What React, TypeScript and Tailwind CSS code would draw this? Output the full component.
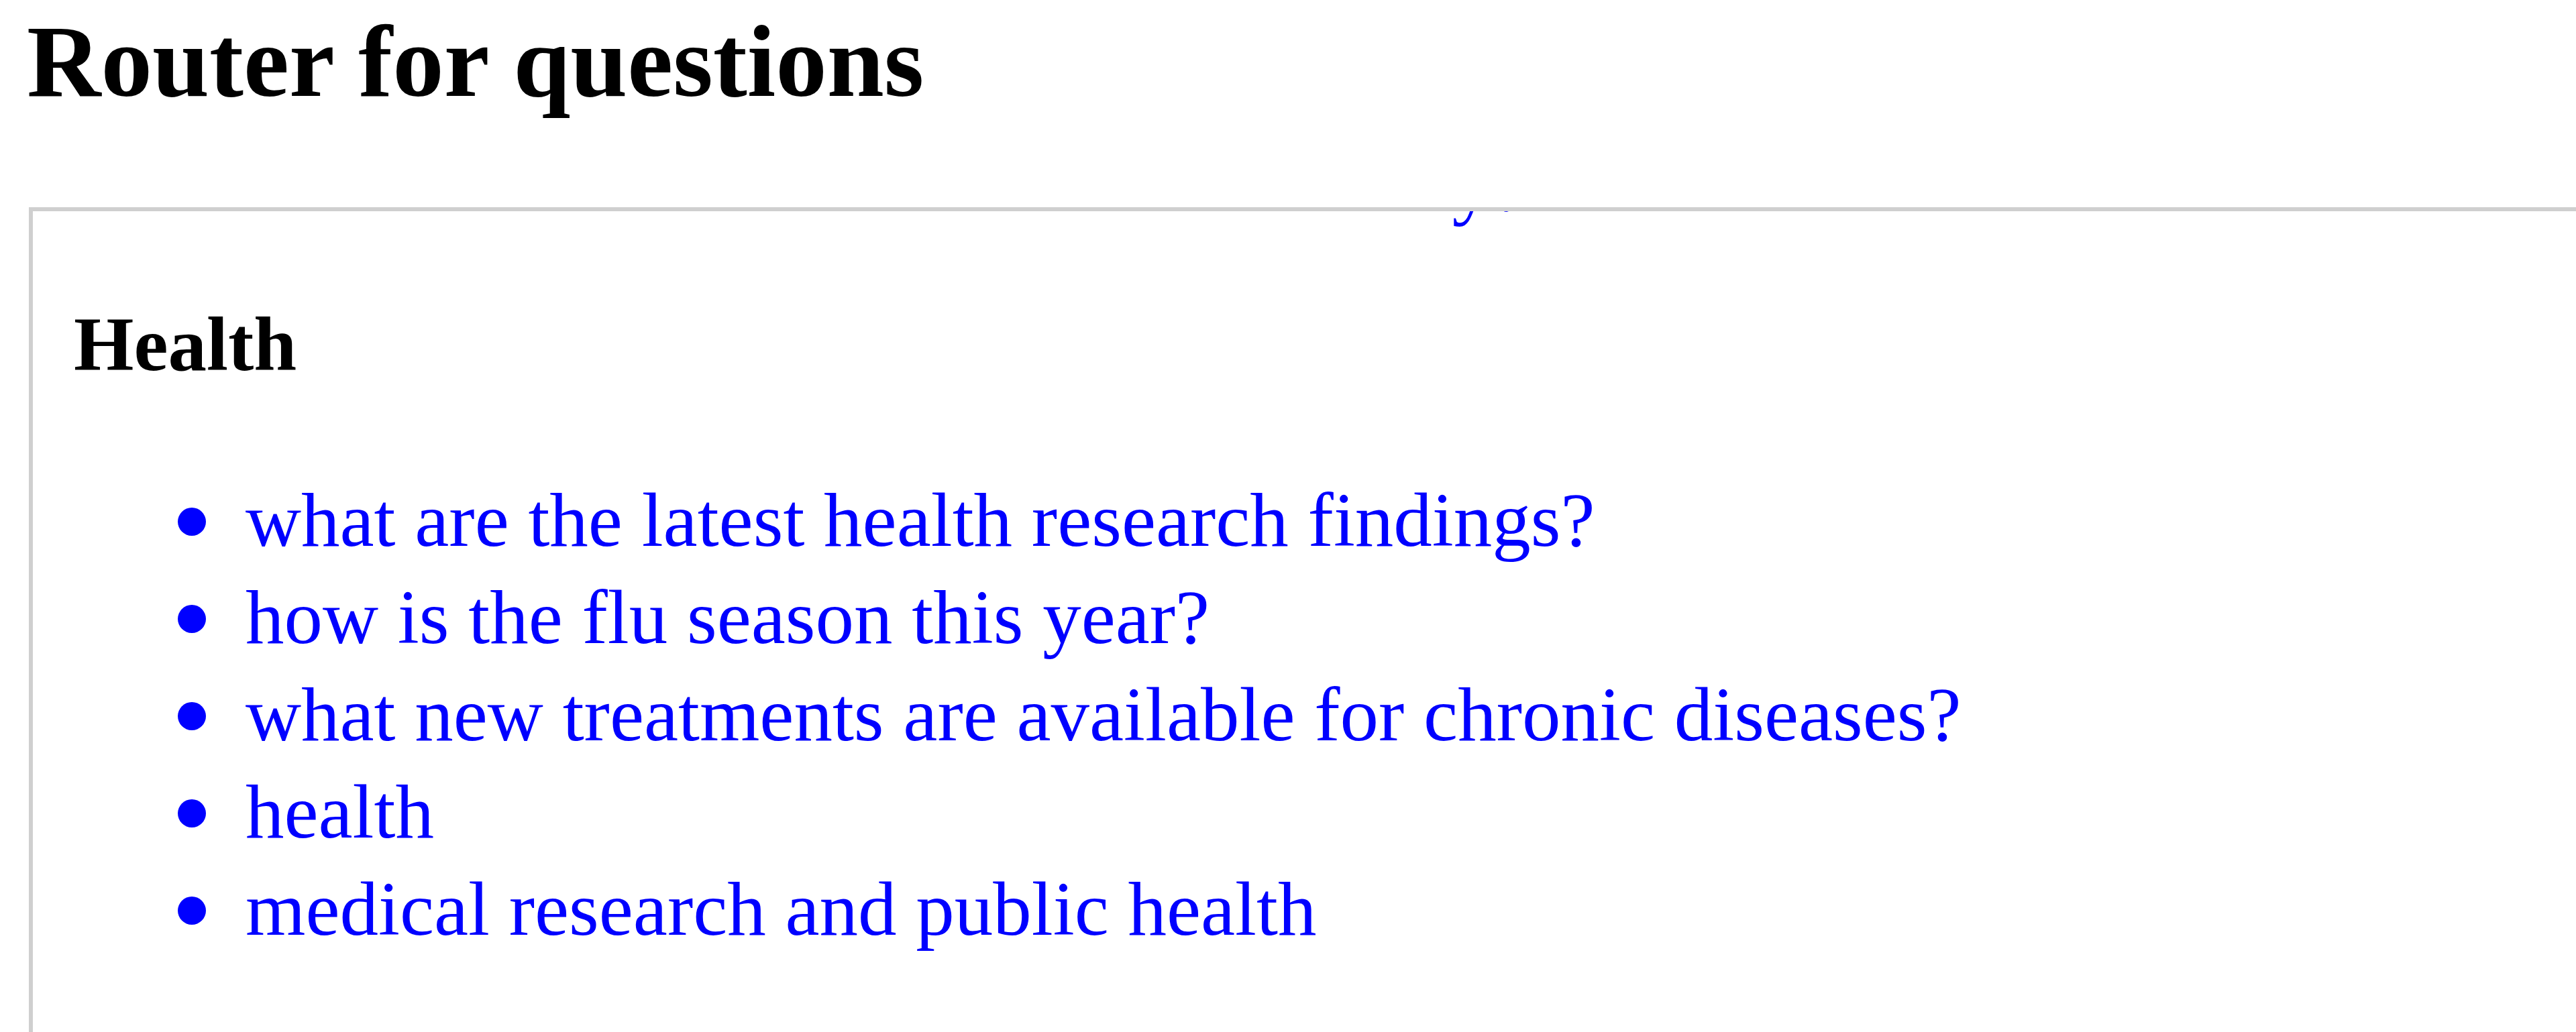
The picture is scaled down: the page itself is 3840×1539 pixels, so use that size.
import React from 'react';

// Question router preview: a title, then an embedded frame scrolled to the "Health" category.

const PREVIOUS_ITEMS = ['what is the current state of the economy?'];

const HEALTH_ITEMS = [
  'what are the latest health research findings?',
  'how is the flu season this year?',
  'what new treatments are available for chronic diseases?',
  'health',
  'medical research and public health',
];

interface QuestionListProps {
  items: string[];
  className?: string;
}

const QuestionList: React.FC<QuestionListProps> = ({ items, className = '' }) => {
  return (
    <ul className={`pl-[155px] ${className}`}>
      {items.map(item => (
        <li key={item} className="flex items-start">
          <span className="mt-[54px] h-[42px] w-[42px] shrink-0 rounded-full bg-[#0000ff]" />
          <span className="ml-[59px] whitespace-nowrap text-[115px] leading-[145px] text-[#0000ff]">{item}</span>
        </li>
      ))}
    </ul>
  );
};

export default function App() {
  return (
    <div className="flex h-[1539px] w-full flex-col overflow-hidden bg-white font-['Liberation_Serif','Times_New_Roman',serif] text-black">
      <h1 className="pl-[40px] pt-[2px] text-[153px] font-bold leading-[180px]">Router for questions</h1>
      <div className="ml-[43px] mt-[127px] flex-1 overflow-hidden border-l-[6px] border-t-[6px] border-[#cfcfcf]">
        <div className="pl-[61px]">
          {/* tail of the previous category, scrolled almost out of view */}
          <QuestionList items={PREVIOUS_ITEMS} className="-mt-[112px] ml-[20px]" />
          <h2 className="mt-[101px] text-[115px] font-bold leading-[130px]">Health</h2>
          <QuestionList items={HEALTH_ITEMS} className="mt-[124px]" />
        </div>
      </div>
    </div>
  );
}
